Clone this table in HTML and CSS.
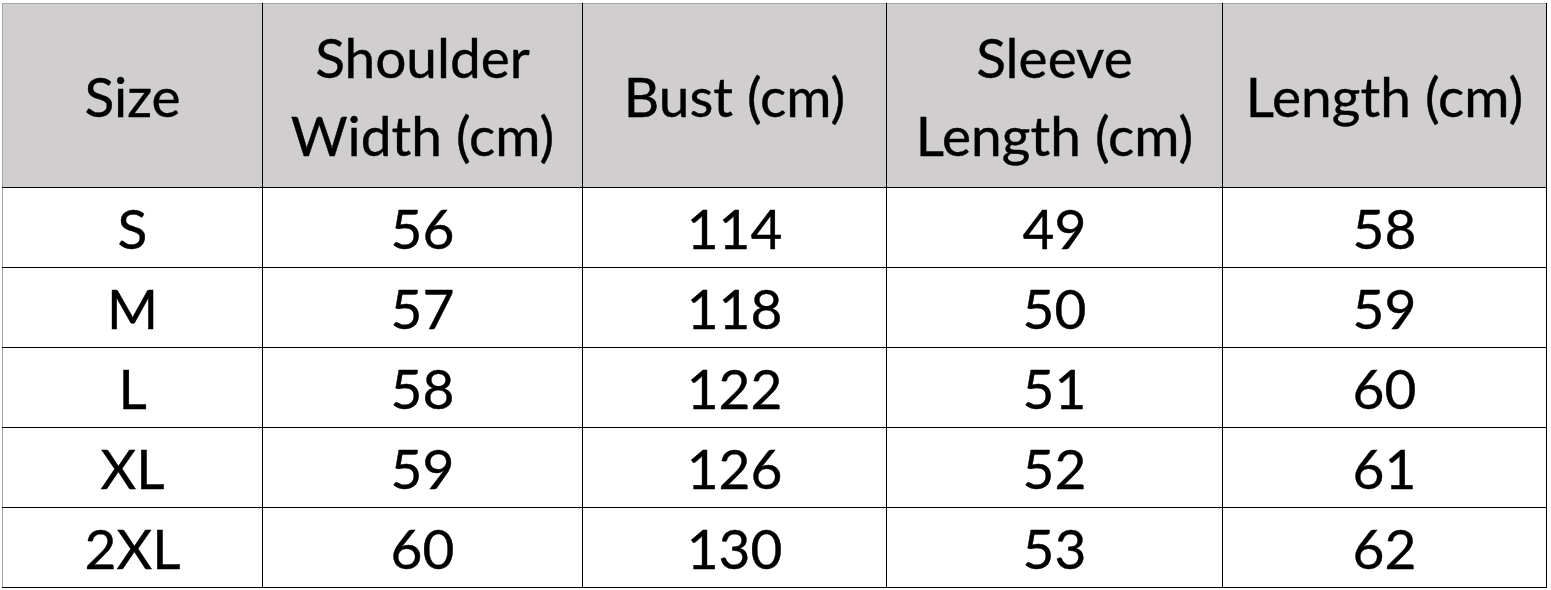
FILE: index.html
```html
<!DOCTYPE html>
<html lang="en">
<head>
<meta charset="utf-8">
<title>Size Chart</title>
<link rel="stylesheet" href="styles.css">
</head>
<body>
<div class="sheet">
  <table class="size-table">
    <colgroup>
      <col class="c1"><col class="c2"><col class="c3"><col class="c4"><col class="c5">
    </colgroup>
    <thead>
      <tr>
        <th>Size</th>
        <th>Shoulder<br>Width (cm)</th>
        <th>Bust (cm)</th>
        <th>Sleeve<br>Length (cm)</th>
        <th>Length (cm)</th>
      </tr>
    </thead>
    <tbody>
      <tr><td>S</td><td>56</td><td>114</td><td>49</td><td>58</td></tr>
      <tr><td>M</td><td>57</td><td>118</td><td>50</td><td>59</td></tr>
      <tr><td>L</td><td>58</td><td>122</td><td>51</td><td>60</td></tr>
      <tr><td>XL</td><td>59</td><td>126</td><td>52</td><td>61</td></tr>
      <tr><td>2XL</td><td>60</td><td>130</td><td>53</td><td>62</td></tr>
    </tbody>
  </table>
</div>
</body>
</html>
```

FILE: styles.css
```css
html, body {
  margin: 0;
  padding: 0;
  background: #ffffff;
}

.sheet {
  padding: 3px 0 0 2px;
}

.size-table {
  border-collapse: collapse;
  table-layout: fixed;
  width: 1544px;
  font-family: "Lato", "Liberation Sans", sans-serif;
  font-size: 55px;
  color: #000;
  -webkit-text-stroke: 0.4px #000;
}

.c1 { width: 260px; }
.c2 { width: 320px; }
.c3 { width: 304px; }
.c4 { width: 336px; }
.c5 { width: 324px; }

.size-table th,
.size-table td {
  padding: 0;
  text-align: center;
  vertical-align: middle;
  border-right: 1px solid #000;
  border-bottom: 1px solid #000;
  overflow: hidden;
  white-space: nowrap;
}

.size-table th {
  height: 183px;
  background: #d0cece;
  font-weight: normal;
  line-height: 78px;
  border-top: 1px solid #a6a6a6;
}

.size-table td {
  height: 77px;
  line-height: 77px;
  padding-top: 2px;
}

.size-table th:first-child,
.size-table td:first-child {
  border-left: 1px solid #a6a6a6;
}
```
